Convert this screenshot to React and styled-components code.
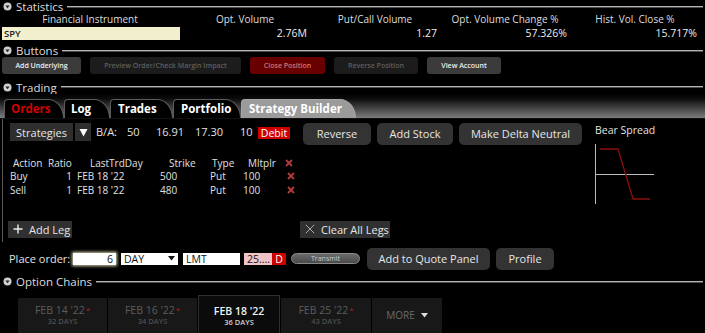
import styled, { createGlobalStyle } from "styled-components";

const Global = createGlobalStyle`
  html, body { margin: 0; background: #000; }
  body {
    font-family: "Open Sans", "DejaVu Sans", sans-serif;
    color: #ddd;
    width: 705px;
    height: 333px;
    overflow: hidden;
  }
`;

function Knob() {
  return (
    <svg width="9" height="9" viewBox="0 0 9 9">
      <circle cx="4.5" cy="4.5" r="4" fill="#cfcfcf" />
      <path d="M2.4 3.4 L6.6 3.4 L4.5 6.2 Z" fill="#222" />
    </svg>
  );
}

function Section({ title, top, h }) {
  return (
    <Head $top={top} $h={h}>
      <Knob />
      <HeadLabel>{title}</HeadLabel>
      <HeadLine />
    </Head>
  );
}

function XMark() {
  return (
    <svg width="8" height="8" viewBox="0 0 8 8">
      <path d="M1 1 L7 7 M7 1 L1 7" stroke="#b33a3a" strokeWidth="1.8" />
    </svg>
  );
}

const stats = [
  { label: "Opt. Volume", value: "2.76M" },
  { label: "Put/Call Volume", value: "1.27" },
  { label: "Opt. Volume Change %", value: "57.326%" },
  { label: "Hist. Vol. Close %", value: "15.717%" },
];

const legs = [
  { action: "Buy", ratio: "1", day: "FEB 18 '22", strike: "500", type: "Put", mult: "100" },
  { action: "Sell", ratio: "1", day: "FEB 18 '22", strike: "480", type: "Put", mult: "100" },
];

const chains = [
  { date: "FEB 14 '22", days: "32 DAYS", w: 89 },
  { date: "FEB 16 '22", days: "34 DAYS", w: 89 },
  { date: "FEB 18 '22", days: "36 DAYS", w: 82, active: true },
  { date: "FEB 25 '22", days: "43 DAYS", w: 90 },
];

export default function App() {
  return (
    <Page>
      <Global />
      <Section title="Statistics" h={13} />
      <StatGrid>
        <StatHead>Financial Instrument</StatHead>
        {stats.map((s) => (
          <StatHead key={s.label}>{s.label}</StatHead>
        ))}
        <Symbol>SPY</Symbol>
        {stats.map((s) => (
          <StatValue key={s.label}>{s.value}</StatValue>
        ))}
      </StatGrid>

      <Section title="Buttons" top={3} h={13} />
      <ButtonRow>
        <SmallBtn $w={79}>Add Underlying</SmallBtn>
        <SmallBtn $w={151} $kind="off">Preview Order/Check Margin Impact</SmallBtn>
        <SmallBtn $w={75} $kind="red">Close Position</SmallBtn>
        <SmallBtn $w={84} $kind="off">Reverse Position</SmallBtn>
        <SmallBtn $w={74}>View Account</SmallBtn>
      </ButtonRow>

      <Section title="Trading" top={6} />
      <TabStrip>
        <Tab $w={60} $red>Orders</Tab>
        <Tab $w={46}>Log</Tab>
        <Tab $w={63}>Trades</Tab>
        <Tab $w={68}>Portfolio</Tab>
        <Tab $w={115} $grey>Strategy Builder</Tab>
      </TabStrip>

      <Panel>
        <LeftCol>
          <Framed>
            <TopRow>
              <DarkBtn $w={63} $ml={7}>Strategies</DarkBtn>
              <DarkBtn $w={16} $ml={2}>
                <svg width="9" height="9" viewBox="0 0 9 9">
                  <path d="M0.5 1 L8.5 1 L4.5 8.5 Z" fill="#fff" />
                </svg>
              </DarkBtn>
              <Quote $ml={5} $w={31}>B/A:</Quote>
              <Quote $w={29}>50</Quote>
              <Quote $w={39}>16.91</Quote>
              <Quote $w={45}>17.30</Quote>
              <Quote $w={18}>10</Quote>
              <Debit>Debit</Debit>
              <BigBtn $w={68} $ml={13}>Reverse</BigBtn>
              <BigBtn $w={76} $ml={6}>Add Stock</BigBtn>
              <BigBtn $w={123} $ml={6}>Make Delta Neutral</BigBtn>
            </TopRow>

            <Legs>
              <Cell $pl={3}>Action</Cell>
              <Cell $pl={3}>Ratio</Cell>
              <Cell $pl={15}>LastTrdDay</Cell>
              <Cell $pl={14}>Strike</Cell>
              <Cell $pl={7}>Type</Cell>
              <Cell $pl={10}>Mltplr</Cell>
              <Cell $pl={5}><XMark /></Cell>
              {legs.map((l) => (
                <LegRow key={l.action}>
                  <Cell>{l.action}</Cell>
                  <Cell $right>{l.ratio}</Cell>
                  <Cell $pl={2}>{l.day}</Cell>
                  <Cell $pl={5}>{l.strike}</Cell>
                  <Cell $pl={5}>{l.type}</Cell>
                  <Cell $pl={5}>{l.mult}</Cell>
                  <Cell $pl={7}><XMark /></Cell>
                </LegRow>
              ))}
            </Legs>

            <LegActions>
              <FlatBtn $w={64} $ml={5}>
                <svg width="10" height="10" viewBox="0 0 10 10">
                  <path d="M5 0.5 V9.5 M0.5 5 H9.5" stroke="#eee" strokeWidth="1.4" />
                </svg>
                Add Leg
              </FlatBtn>
              <FlatBtn $w={90} $ml={228}>
                <svg width="10" height="10" viewBox="0 0 10 10">
                  <path d="M0.8 0.8 L9.2 9.2 M9.2 0.8 L0.8 9.2" stroke="#aaa" strokeWidth="1" />
                </svg>
                Clear All Legs
              </FlatBtn>
            </LegActions>
          </Framed>

          <OrderRow>
            <OrderLabel>Place order:</OrderLabel>
            <Field $w={43} $right $glow>6</Field>
            <Field $w={57} $ml={5}>
              DAY
              <svg width="7" height="5" viewBox="0 0 7 5">
                <path d="M0 0 H7 L3.5 4.5 Z" fill="#111" />
              </svg>
            </Field>
            <Field $w={57} $ml={5}>LMT</Field>
            <Field $w={28} $ml={4} $pink>25....</Field>
            <DBox>D</DBox>
            <Transmit>Transmit</Transmit>
            <BigBtn $w={123} $ml={7}>Add to Quote Panel</BigBtn>
            <BigBtn $w={58} $ml={6}>Profile</BigBtn>
          </OrderRow>
        </LeftCol>

        <RightCol>
          <ChartTitle>Bear Spread</ChartTitle>
          <svg width="64" height="62" viewBox="0 0 64 62">
            <line x1="2.5" y1="0" x2="2.5" y2="60" stroke="#bbb" strokeWidth="1" />
            <line x1="2" y1="30.5" x2="61" y2="30.5" stroke="#bbb" strokeWidth="1" />
            <polyline
              points="7,5 25,5 40,55 57,55"
              fill="none"
              stroke="#8a0f0f"
              strokeWidth="1.3"
            />
          </svg>
        </RightCol>
      </Panel>

      <Section title="Option Chains" top={5} />
      <ChainTabs>
        {chains.map((c) => (
          <ChainTab key={c.date} $w={c.w} $active={c.active}>
            <ChainDate $active={c.active}>
              {c.date}
              {!c.active && <Star>*</Star>}
            </ChainDate>
            <ChainDays $active={c.active}>{c.days}</ChainDays>
          </ChainTab>
        ))}
        <ChainTab $w={70}>
          <More>
            MORE
            <svg width="7" height="5" viewBox="0 0 7 5">
              <path d="M0 0 H7 L3.5 4.5 Z" fill="#ddd" />
            </svg>
          </More>
        </ChainTab>
      </ChainTabs>
    </Page>
  );
}

const Page = styled.div`
  width: 705px;
  height: 333px;
  display: flex;
  flex-direction: column;
  overflow: hidden;
`;

const Head = styled.div`
  display: flex;
  align-items: center;
  height: ${(p) => p.$h || 14}px;
  flex-shrink: 0;
  padding-left: 3px;
  margin-top: ${(p) => p.$top || 0}px;
`;

const HeadLabel = styled.span`
  font-size: 11.5px;
  color: #ddd;
  margin-left: 4px;
  line-height: 13px;
`;

const HeadLine = styled.div`
  flex: 1;
  height: 1px;
  margin: 0 2px 0 4px;
  background: #b5b5b5;
  border-bottom: 1px solid #4a4a4a;
`;

const StatGrid = styled.div`
  display: grid;
  grid-template-columns: 180px repeat(4, 130px);
  grid-template-rows: 13px 15px;
  flex-shrink: 0;
`;

const StatHead = styled.div`
  font-size: 10px;
  line-height: 12px;
  text-align: center;
  color: #ddd;
  white-space: nowrap;
`;

const Symbol = styled.div`
  margin: 1px 0 1px 2px;
  height: 13px;
  background: #f1efce;
  color: #222;
  font-size: 9.5px;
  font-weight: 600;
  line-height: 13px;
  padding-left: 2px;
`;

const StatValue = styled.div`
  font-size: 10.5px;
  line-height: 15px;
  text-align: right;
  padding-right: 3px;
  color: #eee;
`;

const ButtonRow = styled.div`
  display: flex;
  gap: 9px;
  padding-left: 2px;
  height: 17px;
  flex-shrink: 0;
`;

const SmallBtn = styled.div`
  width: ${(p) => p.$w}px;
  height: 17px;
  border-radius: 3px;
  font-size: 7px;
  font-weight: 600;
  line-height: 17px;
  text-align: center;
  white-space: nowrap;
  background: ${(p) =>
    p.$kind === "red" ? "#680000" : p.$kind === "off" ? "#1c1c1c" : "#3b3b3b"};
  color: ${(p) =>
    p.$kind === "red" ? "#c77" : p.$kind === "off" ? "#5e5e5e" : "#eee"};
`;

const TabStrip = styled.div`
  box-sizing: border-box;
  display: flex;
  align-items: flex-end;
  height: 25px;
  flex-shrink: 0;
  padding-left: 4px;
  background: linear-gradient(#000 0%, #0c0c0c 20%, #7c7c7c 100%);
  border-bottom: 1px solid #111;
`;

const Tab = styled.div`
  box-sizing: border-box;
  width: ${(p) => p.$w}px;
  height: 19px;
  padding-left: ${(p) => (p.$w < 62 ? 6 : 7)}px;
  border: 1px solid ${(p) => (p.$grey ? "#a6a6a6" : "#5c5c5c")};
  border-bottom: none;
  border-radius: 4px 16px 0 0 / 4px 19px 0 0;
  background: ${(p) => (p.$grey ? "#9b9b9b" : "#000")};
  color: ${(p) => (p.$red ? "#d20000" : "#fff")};
  font-size: 11.5px;
  font-weight: 700;
  line-height: 18px;
  white-space: nowrap;
`;

const Panel = styled.div`
  display: flex;
  flex-shrink: 0;
`;

const LeftCol = styled.div`
  width: 593px;
  display: flex;
  flex-direction: column;
`;

const Framed = styled.div`
  margin-left: 2px;
  border-left: 1px solid #5a5a5a;
  padding: 4px 0 4px;
`;

const TopRow = styled.div`
  display: flex;
  align-items: flex-start;
  height: 23px;
`;

const DarkBtn = styled.div`
  width: ${(p) => p.$w}px;
  margin-left: ${(p) => p.$ml || 0}px;
  height: 18px;
  background: #2e2e2e;
  display: flex;
  align-items: center;
  justify-content: center;
  font-size: 11px;
  color: #e6e6e6;
`;

const Quote = styled.span`
  width: ${(p) => p.$w}px;
  margin-left: ${(p) => p.$ml || 0}px;
  font-size: 11px;
  line-height: 18px;
  color: #e2e2e2;
  white-space: nowrap;
`;

const Debit = styled.span`
  margin-top: 4px;
  width: 32px;
  height: 12px;
  background: #d00000;
  color: #fff;
  font-size: 10.5px;
  line-height: 12px;
  text-align: center;
`;

const BigBtn = styled.div`
  width: ${(p) => p.$w}px;
  margin-left: ${(p) => p.$ml || 0}px;
  height: 22px;
  border-radius: 5px;
  background: #333;
  color: #e6e6e6;
  font-size: 11px;
  line-height: 22px;
  text-align: center;
  white-space: nowrap;
`;

const Legs = styled.div`
  display: grid;
  grid-template-columns: 35px 30px 80px 50px 33px 42px 16px;
  grid-auto-rows: 13.5px;
  margin: 10px 0 0 7px;
  font-size: 10px;
  color: #e0e0e0;
`;

const LegRow = styled.div`
  display: contents;
`;

const Cell = styled.div`
  display: flex;
  align-items: center;
  justify-content: ${(p) => (p.$right ? "flex-end" : "flex-start")};
  padding-left: ${(p) => p.$pl || 0}px;
  padding-right: ${(p) => (p.$right ? 3 : 0)}px;
  white-space: nowrap;
`;

const LegActions = styled.div`
  display: flex;
  margin-top: 24px;
`;

const FlatBtn = styled.div`
  width: ${(p) => p.$w}px;
  margin-left: ${(p) => p.$ml || 0}px;
  height: 17px;
  box-sizing: border-box;
  padding-left: 5px;
  display: flex;
  align-items: center;
  gap: 6px;
  background: #303030;
  color: #e6e6e6;
  font-size: 11px;
  white-space: nowrap;
`;

const OrderRow = styled.div`
  display: flex;
  align-items: center;
  margin-top: 6px;
  height: 22px;
  padding-left: 9px;
`;

const OrderLabel = styled.span`
  width: 64px;
  font-size: 11px;
  color: #e2e2e2;
`;

const Field = styled.div`
  box-sizing: border-box;
  width: ${(p) => p.$w}px;
  margin-left: ${(p) => p.$ml || 0}px;
  height: 12px;
  padding: 0 3px;
  display: flex;
  align-items: center;
  justify-content: ${(p) => (p.$right ? "flex-end" : "space-between")};
  background: ${(p) => (p.$pink ? "#f2c4c8" : "#fff")};
  color: #111;
  font-size: 10.5px;
  box-shadow: ${(p) => (p.$glow ? "0 0 3px 1px #d8d4b0" : "none")};
`;

const DBox = styled.div`
  width: 14px;
  height: 12px;
  background: #d00000;
  color: #fff;
  font-size: 10.5px;
  line-height: 12px;
  text-align: center;
`;

const Transmit = styled.div`
  box-sizing: border-box;
  width: 69px;
  height: 11px;
  margin-left: 5px;
  border-radius: 6px;
  border: 1px solid #8a8a8a;
  background: linear-gradient(#6a6a6a, #4a4a4a);
  color: #ccc;
  font-size: 7px;
  line-height: 9px;
  text-align: center;
`;

const RightCol = styled.div`
  display: flex;
  flex-direction: column;
  padding-top: 4px;
`;

const ChartTitle = styled.div`
  font-size: 10.5px;
  color: #e2e2e2;
  line-height: 14px;
  margin-bottom: 7px;
  margin-left: 2px;
`;

const ChainTabs = styled.div`
  display: flex;
  align-items: flex-end;
  gap: 1px;
  margin-top: 6px;
  padding-left: 18px;
  height: 38px;
  flex-shrink: 0;
  border-bottom: 1px solid #2c2c2c;
`;

const ChainTab = styled.div`
  box-sizing: border-box;
  width: ${(p) => p.$w}px;
  height: ${(p) => (p.$active ? 38 : 35)}px;
  display: flex;
  flex-direction: column;
  align-items: center;
  justify-content: center;
  padding-top: ${(p) => (p.$active ? 4 : 0)}px;
  background: ${(p) => (p.$active ? "#0b0b0b" : "#181818")};
  border: ${(p) => (p.$active ? "1px solid #2e2e2e" : "none")};
  border-bottom: none;
`;

const ChainDate = styled.div`
  font-size: 10.5px;
  line-height: 12px;
  font-weight: ${(p) => (p.$active ? 600 : 400)};
  color: ${(p) => (p.$active ? "#f2f2f2" : "#5c5c5c")};
  white-space: nowrap;
`;

const Star = styled.span`
  color: #a52020;
  font-size: 8px;
  vertical-align: top;
  margin-left: 1px;
`;

const ChainDays = styled.div`
  font-size: 7.5px;
  line-height: 10px;
  font-weight: 600;
  color: ${(p) => (p.$active ? "#cfcfcf" : "#4e4e4e")};
`;

const More = styled.div`
  display: flex;
  align-items: center;
  gap: 6px;
  font-size: 10px;
  color: #6a6a6a;
`;
